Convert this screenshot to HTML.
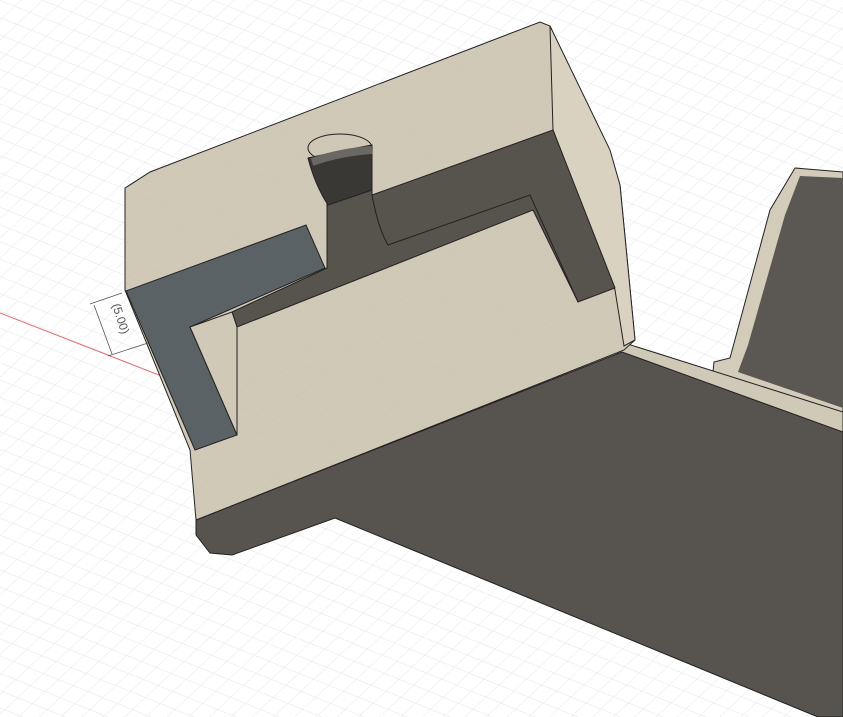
<!DOCTYPE html>
<html><head><style>
html,body{margin:0;padding:0;background:#fff;width:843px;height:717px;overflow:hidden}
</style></head><body>
<svg width="843" height="717" viewBox="0 0 843 717" xmlns="http://www.w3.org/2000/svg">
<defs>
<pattern id="g" width="16" height="16" patternUnits="userSpaceOnUse" patternTransform="rotate(22) skewX(-25)">
<path d="M0 0H16M0 0V16" stroke="#e6e6e6" stroke-width="1" fill="none"/>
</pattern>
<pattern id="g2" width="16" height="16" patternUnits="userSpaceOnUse" patternTransform="rotate(22) skewX(-25)">
<path d="M0 0H16M0 0V16" stroke="#c4bdab" stroke-width="0.7" fill="none"/>
</pattern>
</defs>
<rect width="843" height="717" fill="#fff"/>
<rect width="843" height="717" fill="url(#g)"/>
<line x1="0" y1="313" x2="843" y2="642" stroke="#e07070" stroke-width="1"/>
<!-- right block -->
<polygon points="795,168 843,172 843,420 712,382 714,362 730,358 770,210" fill="#d3ccba" stroke="#222" stroke-width="1"/>
<polygon points="800,176 843,178 843,408 738,372 748,345 785,215" fill="#5b5853"/>
<!-- strip between -->
<polygon points="615,340 843,412 843,440 618,358" fill="#d0c9b7" stroke="#222" stroke-width="1"/>
<!-- bottom plate -->
<polygon points="196,520 622,352 843,432 843,717 818,717 335,518 232,555 210,553 196,535" fill="#57544f" stroke="#222" stroke-width="1"/>
<!-- block main -->
<polygon points="125,188 150,172 540,22 550,26 620,185 635,340 624,350 196,520 190,450 125,290" fill="#d0c9b7" stroke="#222" stroke-width="1"/>
<polygon points="125,188 150,172 540,22 550,26 620,185 635,340 624,350 196,520 190,450 125,290" fill="url(#g2)" opacity="0.45"/>
<!-- right face -->
<polygon points="550,26 610,150 620,185 635,340 624,346 615,290 553,130" fill="#d9d2c1" stroke="#222" stroke-width="1"/>
<!-- dark channel -->
<polygon points="232,312 327,268 327,165 372,165 372,195 553,130 615,288 578,302 533,210 237,327" fill="#57534d" stroke="#222" stroke-width="1"/>
<path d="M372,195 Q378,228 388,245 L530,195 L578,302" fill="none" stroke="#222" stroke-width="1"/>
<!-- hole -->
<ellipse cx="340" cy="148" rx="32" ry="14" fill="#cfc8b6" stroke="#222"/>
<path d="M308,158 Q315,185 328,205 L372,190 L372,145 Q345,150 308,158Z" fill="#3a3835" stroke="#222"/>
<path d="M312,162 Q340,152 372,150" stroke="#6a6864" stroke-width="8" fill="none"/>
<!-- L shape -->
<polygon points="126,291 306,225 325,268 190,327 237,435 195,450" fill="#5a6266" stroke="#222" stroke-width="1"/>
<polygon points="190,327 232,312 237,327 237,435" fill="#d0c9b7" stroke="#222" stroke-width="1"/>
<!-- dimension -->
<g stroke="#555" stroke-width="0.8" fill="none">
<line x1="90" y1="304" x2="122" y2="293"/>
<line x1="108" y1="356" x2="148" y2="343"/>
<line x1="94" y1="305" x2="112" y2="354"/>
</g>
<text x="0" y="0" transform="translate(112,305) rotate(72)" font-family="Liberation Sans, sans-serif" font-size="12" fill="#555">(5.00)</text>
</svg>
</body></html>
